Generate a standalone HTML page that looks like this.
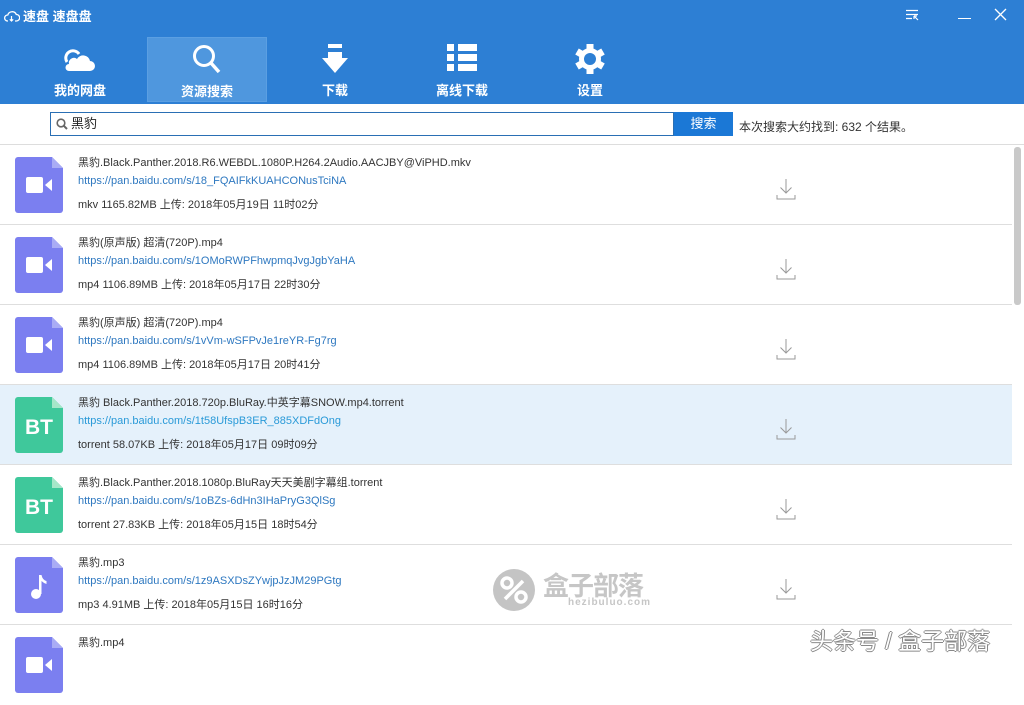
<!DOCTYPE html>
<html><head><meta charset="utf-8">
<style>
*{margin:0;padding:0;box-sizing:border-box}
body{width:1024px;height:660px;overflow:hidden;background:#fff;font-family:"Liberation Sans","Noto Sans CJK SC",sans-serif;position:relative}
.top{position:absolute;left:0;top:0;width:1024px;height:104px;background:#2d7fd4}
.title{position:absolute;left:4px;top:6px;color:#fff;font-size:13px;font-weight:bold;display:flex;align-items:center;gap:3px}
.nav{position:absolute;top:37px;width:120px;height:65px;text-align:center;color:#fff;font-size:13px;font-weight:bold}
.nav svg{position:absolute;left:50%;transform:translateX(-50%);top:7px}
.nav span{position:absolute;left:0;right:0;top:43px}
.sel{background:#4f97de;border:1px solid #5b9fe2}
.search{position:absolute;left:50px;top:112px;width:624px;height:24px;border:1px solid #2a6fb4;font-size:13px;padding-left:20px;line-height:22px;color:#222}
.btn{position:absolute;left:674px;top:112px;width:59px;height:24px;background:#1b78d6;color:#fff;font-size:13px;text-align:center;line-height:24px}
.res{position:absolute;left:739px;top:118px;font-size:12px;color:#333}
.hl{position:absolute;left:0;top:144px;width:1024px;height:1px;background:#ddd}
.row{position:absolute;left:0;width:1012px;height:80px;border-bottom:1px solid #dedede}
.row .ic{position:absolute;left:15px;top:12px}
.row .t{position:absolute;left:78px;font-size:11px;color:#333;white-space:nowrap}
.row .l1{top:9px}.row .l2{top:30px;color:#2e78c0}.row .l3{top:51px}
.row .dl{position:absolute;left:776px;top:33px}
.sb{position:absolute;left:1014px;top:147px;width:7px;height:158px;background:#c9c9c9;border-radius:3px}
</style></head><body>
<div class="top">
 <div class="title"><svg width="16" height="14" viewBox="0 0 16 14"><path d="M4 12H3.5A3 3 0 0 1 3.8 6 4.5 4.5 0 0 1 12.3 5.5 3.2 3.2 0 0 1 12.5 12H11" fill="none" stroke="#fff" stroke-width="1.3"/><path d="M7.5 7v5M5.8 10.3l1.7 1.7 1.7-1.7" fill="none" stroke="#fff" stroke-width="1.2"/></svg>速盘 速盘盘</div>
 <svg style="position:absolute;left:905px;top:9px" width="14" height="12" viewBox="0 0 14 12"><path d="M1 1.5h12M1 5.5h12M1 9.5h6M9 7l4 4M9 7h3M9 7v3" stroke="#fff" stroke-width="1.2" fill="none"/></svg>
 <div style="position:absolute;left:958px;top:18px;width:13px;height:1px;background:#fff"></div>
 <svg style="position:absolute;left:994px;top:8px" width="13" height="13" viewBox="0 0 13 13"><path d="M1 1l11 11M12 1L1 12" stroke="#fff" stroke-width="1.3"/></svg>

 <div class="nav" style="left:20px"><svg width="32" height="26" viewBox="0 0 32 26" style="top:10px"><path d="M5 24h21a5 5 0 0 0 0-10 7 7 0 0 0-13-2 5 5 0 0 0-8 5 3.5 3.5 0 0 0 0 7z" fill="#fff"/><path d="M3 15a7 7 0 0 1 12-8" fill="none" stroke="#fff" stroke-width="3"/></svg><span>我的网盘</span></div>
 <div class="nav sel" style="left:147px"><svg width="30" height="32" viewBox="0 0 30 32" style="top:6px"><circle cx="12" cy="12" r="9.5" fill="none" stroke="#fff" stroke-width="3"/><path d="M19 19l8 9" stroke="#fff" stroke-width="3.5"/></svg><span>资源搜索</span></div>
 <div class="nav" style="left:275px"><svg width="26" height="30" viewBox="0 0 26 30"><rect x="6" y="0" width="14" height="4" fill="#fff"/><rect x="6" y="8" width="14" height="7" fill="#fff"/><path d="M0 14h26L13 29z" fill="#fff"/></svg><span>下载</span></div>
 <div class="nav" style="left:402px"><svg width="30" height="28" viewBox="0 0 30 28"><g fill="#fff"><rect x="0" y="0" width="7" height="7"/><rect x="11" y="0" width="19" height="7"/><rect x="0" y="10" width="7" height="7"/><rect x="11" y="10" width="19" height="7"/><rect x="0" y="20" width="7" height="7"/><rect x="11" y="20" width="19" height="7"/></g></svg><span>离线下载</span></div>
 <div class="nav" style="left:530px"><svg width="30" height="30" viewBox="0 0 30 30"><g transform="translate(15 15)" fill="#fff"><circle r="11"/><g id="t"><rect x="-3.5" y="-15" width="7" height="6"/></g><use href="#t" transform="rotate(60)"/><use href="#t" transform="rotate(120)"/><use href="#t" transform="rotate(180)"/><use href="#t" transform="rotate(240)"/><use href="#t" transform="rotate(300)"/><circle r="6" fill="#2d7fd4"/></g></svg><span>设置</span></div>
</div>

<div class="search"><svg style="position:absolute;left:5px;top:5px" width="12" height="12" viewBox="0 0 12 12"><circle cx="5" cy="5" r="3.8" fill="none" stroke="#666" stroke-width="1.6"/><path d="M8 8l3 3" stroke="#666" stroke-width="2"/></svg>黑豹</div>
<div class="btn">搜索</div>
<div class="res">本次搜索大约找到: 632 个结果。</div>
<div class="hl"></div>

<svg width="0" height="0" style="position:absolute"><defs>
<g id="vid"><path d="M3 0h34l11 11v42a3 3 0 0 1-3 3H3a3 3 0 0 1-3-3V3a3 3 0 0 1 3-3z" fill="#7b7ff0"/><path d="M37 0l11 11H37z" fill="#a9acf5"/><rect x="11" y="20" width="17" height="16" rx="2" fill="#fff"/><path d="M30 28l7-6v12z" fill="#fff"/></g>
<g id="bt"><path d="M3 0h34l11 11v42a3 3 0 0 1-3 3H3a3 3 0 0 1-3-3V3a3 3 0 0 1 3-3z" fill="#3fc89b"/><path d="M37 0l11 11H37z" fill="#a6e7c9"/><text x="24" y="37" font-family="Liberation Sans" font-weight="bold" font-size="21" fill="#fff" text-anchor="middle">BT</text></g>
<g id="mus"><path d="M3 0h34l11 11v42a3 3 0 0 1-3 3H3a3 3 0 0 1-3-3V3a3 3 0 0 1 3-3z" fill="#7b7ff0"/><path d="M37 0l11 11H37z" fill="#a9acf5"/><circle cx="21" cy="37" r="5" fill="#fff"/><path d="M24 37V18h2.5q1 5 5 6v3q-3-1-5-3V37z" fill="#fff"/></g>
<g id="dl"><path d="M10 1v14M4.5 9.5L10 15l5.5-5.5M1 17v4h18v-4" fill="none" stroke="#999" stroke-width="1"/></g>
</defs></svg>

<div class="row" style="top:145px"><svg class="ic" width="48" height="56"><use href="#vid"/></svg><div class="t l1">黑豹.Black.Panther.2018.R6.WEBDL.1080P.H264.2Audio.AACJBY@ViPHD.mkv</div><div class="t l2">https://pan.baidu.com/s/18_FQAIFkKUAHCONusTciNA</div><div class="t l3">mkv 1165.82MB 上传: 2018年05月19日 11时02分</div><svg class="dl" width="20" height="22"><use href="#dl"/></svg></div>
<div class="row" style="top:225px"><svg class="ic" width="48" height="56"><use href="#vid"/></svg><div class="t l1">黑豹(原声版) 超清(720P).mp4</div><div class="t l2">https://pan.baidu.com/s/1OMoRWPFhwpmqJvgJgbYaHA</div><div class="t l3">mp4 1106.89MB 上传: 2018年05月17日 22时30分</div><svg class="dl" width="20" height="22"><use href="#dl"/></svg></div>
<div class="row" style="top:305px"><svg class="ic" width="48" height="56"><use href="#vid"/></svg><div class="t l1">黑豹(原声版) 超清(720P).mp4</div><div class="t l2">https://pan.baidu.com/s/1vVm-wSFPvJe1reYR-Fg7rg</div><div class="t l3">mp4 1106.89MB 上传: 2018年05月17日 20时41分</div><svg class="dl" width="20" height="22"><use href="#dl"/></svg></div>
<div class="row" style="top:385px;background:#e5f1fb"><svg class="ic" width="48" height="56"><use href="#bt"/></svg><div class="t l1">黑豹 Black.Panther.2018.720p.BluRay.中英字幕SNOW.mp4.torrent</div><div class="t l2" style="color:#2a9ad8">https://pan.baidu.com/s/1t58UfspB3ER_885XDFdOng</div><div class="t l3">torrent 58.07KB 上传: 2018年05月17日 09时09分</div><svg class="dl" width="20" height="22"><use href="#dl"/></svg></div>
<div class="row" style="top:465px"><svg class="ic" width="48" height="56"><use href="#bt"/></svg><div class="t l1">黑豹.Black.Panther.2018.1080p.BluRay天天美剧字幕组.torrent</div><div class="t l2">https://pan.baidu.com/s/1oBZs-6dHn3IHaPryG3QlSg</div><div class="t l3">torrent 27.83KB 上传: 2018年05月15日 18时54分</div><svg class="dl" width="20" height="22"><use href="#dl"/></svg></div>
<div class="row" style="top:545px"><svg class="ic" width="48" height="56"><use href="#mus"/></svg><div class="t l1">黑豹.mp3</div><div class="t l2">https://pan.baidu.com/s/1z9ASXDsZYwjpJzJM29PGtg</div><div class="t l3">mp3 4.91MB 上传: 2018年05月15日 16时16分</div><svg class="dl" width="20" height="22"><use href="#dl"/></svg></div>
<div class="row" style="top:625px;border:none"><svg class="ic" width="48" height="56"><use href="#vid"/></svg><div class="t l1">黑豹.mp4</div></div>
<div class="sb"></div>

<svg style="position:absolute;left:491px;top:567px" width="46" height="46" viewBox="0 0 46 46"><circle cx="23" cy="23" r="21" fill="#c4c4c4"/><circle cx="16" cy="16" r="5" fill="none" stroke="#fff" stroke-width="3.5"/><circle cx="30" cy="30" r="5" fill="none" stroke="#fff" stroke-width="3.5"/><path d="M14 32l18-18" stroke="#fff" stroke-width="3.5"/></svg>
<div style="position:absolute;left:543px;top:566px;font-size:26px;font-weight:bold;color:#c6c6c6;letter-spacing:-1px">盒子部落</div>
<div style="position:absolute;left:568px;top:597px;font-size:10px;font-weight:bold;color:#c6c6c6;letter-spacing:1px">hezibuluo.com</div>
<div style="position:absolute;left:810px;top:622px;font-size:23px;font-weight:normal;color:#fff;text-shadow:-1px 0 0 #888,1px 0 0 #888,0 -1px 0 #888,0 1px 0 #888">头条号 / 盒子部落</div>
</body></html>
